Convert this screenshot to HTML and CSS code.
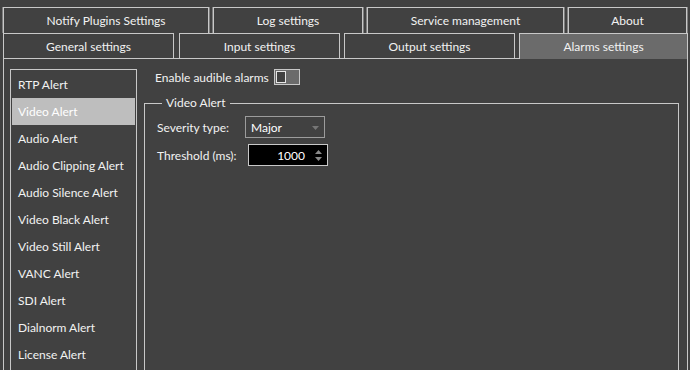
FILE: index.html
```html
<!DOCTYPE html>
<html>
<head>
<meta charset="utf-8">
<link rel="stylesheet" href="styles.css">
</head>
<body>
<div class="window">
  <div class="tabbar">
    <div class="tabrow row1">
      <div class="tab w-notify">Notify Plugins Settings</div>
      <div class="tab w-log">Log settings</div>
      <div class="tab w-service">Service management</div>
      <div class="tab w-about">About</div>
    </div>
    <div class="tabrow row2">
      <div class="tab w-general">General settings</div>
      <div class="tab w-input">Input settings</div>
      <div class="tab w-output">Output settings</div>
      <div class="tab w-alarms selected">Alarms settings</div>
    </div>
  </div>
  <div class="pane">
    <ul class="alert-list">
      <li>RTP Alert</li>
      <li class="active">Video Alert</li>
      <li>Audio Alert</li>
      <li>Audio Clipping Alert</li>
      <li>Audio Silence Alert</li>
      <li>Video Black Alert</li>
      <li>Video Still Alert</li>
      <li>VANC Alert</li>
      <li>SDI Alert</li>
      <li>Dialnorm Alert</li>
      <li>License Alert</li>
    </ul>
    <div class="settings">
      <div class="enable-row">
        <span class="enable-label">Enable audible alarms</span>
        <span class="toggle"><span class="knob"></span></span>
      </div>
      <fieldset class="group">
        <legend>Video Alert</legend>
        <div class="form-row">
          <span class="label lbl-sev">Severity type:</span>
          <div class="combo">
            <span class="combo-text">Major</span>
            <svg class="combo-arrow" width="7" height="4" viewBox="0 0 7 4"><path d="M0 0H7L3.5 4Z" fill="#767676"/></svg>
          </div>
        </div>
        <div class="form-row row-gap">
          <span class="label lbl-thr">Threshold (ms):</span>
          <div class="spin">
            <span class="spin-val">1000</span>
            <span class="spin-arrows">
              <svg width="7" height="4" viewBox="0 0 7 4"><path d="M0 4H7L3.5 0Z" fill="#8a8a8a"/></svg>
              <svg width="7" height="4" viewBox="0 0 7 4"><path d="M0 0H7L3.5 4Z" fill="#8a8a8a"/></svg>
            </span>
          </div>
        </div>
      </fieldset>
    </div>
  </div>
</div>
</body>
</html>
```
FILE: styles.css
```css
html, body {
  margin: 0;
  padding: 0;
  background: #414141;
  overflow: hidden;
}
body {
  width: 690px;
  height: 370px;
  font-family: "Lato", "Noto Sans", sans-serif;
  font-size: 12px;
  color: #f2f2f2;
}
.window {
  padding-top: 7px;
  width: 690px;
}
.tabrow {
  display: flex;
  padding-left: 3px;
}
.row1 { gap: 4px; }
.row2 { gap: 4px; }
.tab {
  flex: none;
  box-sizing: border-box;
  display: flex;
  align-items: center;
  justify-content: center;
  border: 1px solid #c8c8c8;
  border-bottom: none;
  background: #414141;
  white-space: nowrap;
}
.row1 .tab {
  height: 26px;
  box-shadow: 1px 0 0 #7e7e7e, -1px 0 0 #7e7e7e;
}
.row2 .tab { height: 25px; }
.row2 .w-general { margin-right: 1px; }
.w-notify { width: 206px; }
.w-log { width: 150px; }
.w-service { width: 197px; }
.w-about { width: 119px; }
.w-general { width: 171px; }
.w-input { width: 161px; }
.w-output { width: 171px; }
.w-alarms { width: 169px; }
.tab.selected {
  background: #6b6b6b;
  height: 26px;
  margin-bottom: -1px;
  position: relative;
  z-index: 1;
}
.pane {
  box-sizing: border-box;
  margin-left: 3px;
  width: 685px;
  height: 320px;
  border: 1px solid #c8c8c8;
  border-bottom: none;
  padding: 10px 8px 0 6px;
  display: flex;
  align-items: flex-start;
}
.alert-list {
  list-style: none;
  margin: 0;
  padding: 1px;
  width: 127px;
  height: 310px;
  box-sizing: border-box;
  border: 1px solid #c8c8c8;
  flex: none;
}
.alert-list li {
  height: 27px;
  line-height: 27px;
  padding-left: 6px;
  white-space: nowrap;
}
.alert-list li.active {
  background: #bebebe;
  color: #ffffff;
}
.settings {
  flex: none;
  width: 535px;
  margin-left: 7px;
}
.enable-row {
  display: flex;
  align-items: center;
  height: 16px;
  margin-left: 11px;
  gap: 5px;
}
.toggle {
  box-sizing: border-box;
  width: 26px;
  height: 16px;
  border: 1px solid #c8c8c8;
  background: #6b6b6b;
  padding: 1px;
  display: flex;
}
.knob {
  box-sizing: border-box;
  width: 10px;
  height: 12px;
  border: 1px solid #e6e6e6;
  background: #414141;
}
.group {
  margin: 10px 0 0 0;
  padding: 5px 0 0 12px;
  border: 1px solid #c8c8c8;
  height: 290px;
  box-sizing: border-box;
  min-width: 0;
}
.group legend {
  margin-left: 5px;
  padding: 0 5px 0 4px;
  line-height: 16px;
}
.form-row {
  display: flex;
  align-items: center;
  height: 22px;
}
.row-gap { margin-top: 6px; }
.label { flex: none; }
.lbl-sev { width: 88px; }
.lbl-thr { width: 91px; }
.combo {
  box-sizing: border-box;
  width: 80px;
  height: 22px;
  border: 1px solid #9c9c9c;
  display: flex;
  align-items: center;
  justify-content: space-between;
  padding: 0 5px 0 5px;
  color: #ffffff;
}
.combo-arrow { margin-top: 1px; }
.spin {
  box-sizing: border-box;
  width: 80px;
  height: 22px;
  border: 1px solid #c8c8c8;
  background: #000000;
  display: flex;
  align-items: center;
  justify-content: flex-end;
  padding-right: 5px;
  color: #ffffff;
}
.spin-val { margin-right: 10px; }
.spin-arrows {
  display: flex;
  flex-direction: column;
  gap: 3px;
}
.spin-arrows svg { display: block; }
```
